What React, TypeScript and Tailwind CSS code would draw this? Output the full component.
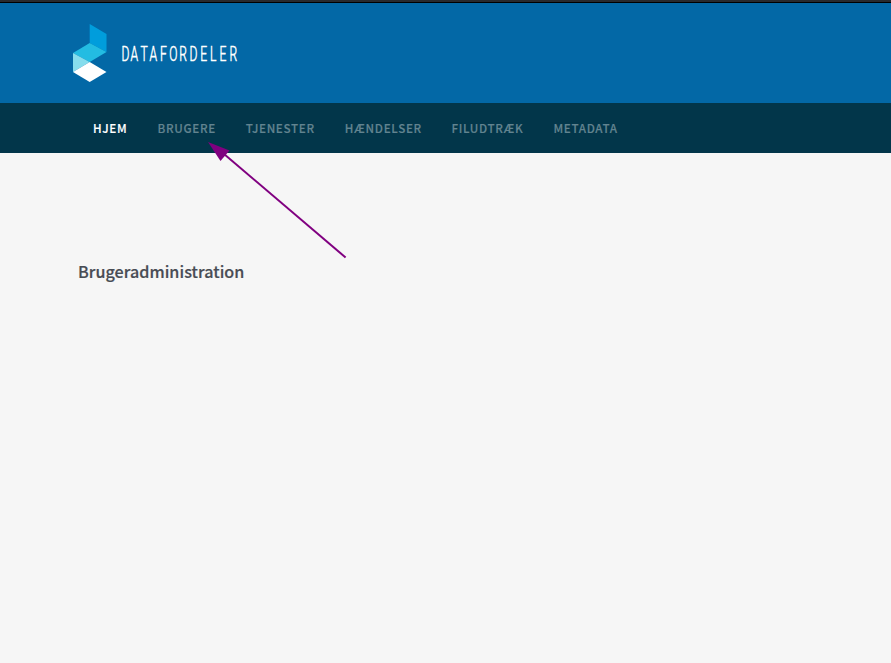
const links = [
  { label: 'HJEM', width: 'w-[34.5px]' },
  { label: 'BRUGERE', width: 'w-[58.3px]' },
  { label: 'TJENESTER', width: 'w-[69px]' },
  { label: 'HÆNDELSER', width: 'w-[76.7px]' },
  { label: 'FILUDTRÆK', width: 'w-[72px]' },
  { label: 'METADATA', width: 'w-[64px]' },
];

function Logo() {
  return (
    <svg className="block h-[60px] w-[170px]" viewBox="0 0 170 60" role="img" aria-label="Datafordeler">
      <path d="M16.700 1 33.500 11V29L16.700 20Z" fill="#009ddc" />
      <path d="M16.700 20 33.500 29 16.700 39 0 30Z" fill="#23bce2" />
      <path d="M0 30 16.700 39 0 49Z" fill="#86dded" />
      <path d="M16.700 39 33.500 49 16.700 59 0 49Z" fill="#fff" />
      <text
        transform="translate(0 37.8) scale(.62 1)"
        x="78.2 92.7 109 123.5 140.3 155.3 171.5 187.9 205.3 221 236.3 252.5"
        className="fill-white stroke-white font-['Roboto',sans-serif] text-[19.5px] font-light [stroke-width:0.55px]"
      >
        DATAFORDELER
      </text>
    </svg>
  );
}

export default function App() {
  return (
    <div className="relative h-[663px] w-full overflow-hidden bg-[#f6f6f6] font-['Noto_Sans_CJK_SC',sans-serif]">
      <div className="h-[3px] border-b border-black bg-[#292a2d]" />
      <header className="h-[100px] bg-[#0368a6] pt-5 pl-[73px]">
        <Logo />
      </header>
      <nav className="flex h-[50px] items-center gap-[30px] bg-[#02364a] pl-[93px] text-[11.64px] leading-[20px] font-medium tracking-[0.68px] text-[#628490] [-webkit-text-stroke:0.15px]">
        {links.map((l, i) => (
          <a key={l.label} className={`${l.width} shrink-0 whitespace-nowrap ${i === 0 ? 'text-white' : ''}`}>
            {l.label}
          </a>
        ))}
      </nav>
      <main className="pt-[106px] pl-[78px]">
        <h1 className="text-[16.11px] leading-6 font-medium tracking-[0.05px] text-[#484c54] [-webkit-text-stroke:0.2px]">
          Brugeradministration
        </h1>
      </main>
      <svg className="absolute top-[135px] left-[200px] h-[130px] w-[160px]" viewBox="0 0 160 130">
        <path d="M24 19 145.600 122.500" stroke="#800080" strokeWidth="2" />
        <path d="M8 7 29.500 15.500 20.500 26Z" fill="#800080" />
      </svg>
    </div>
  );
}
